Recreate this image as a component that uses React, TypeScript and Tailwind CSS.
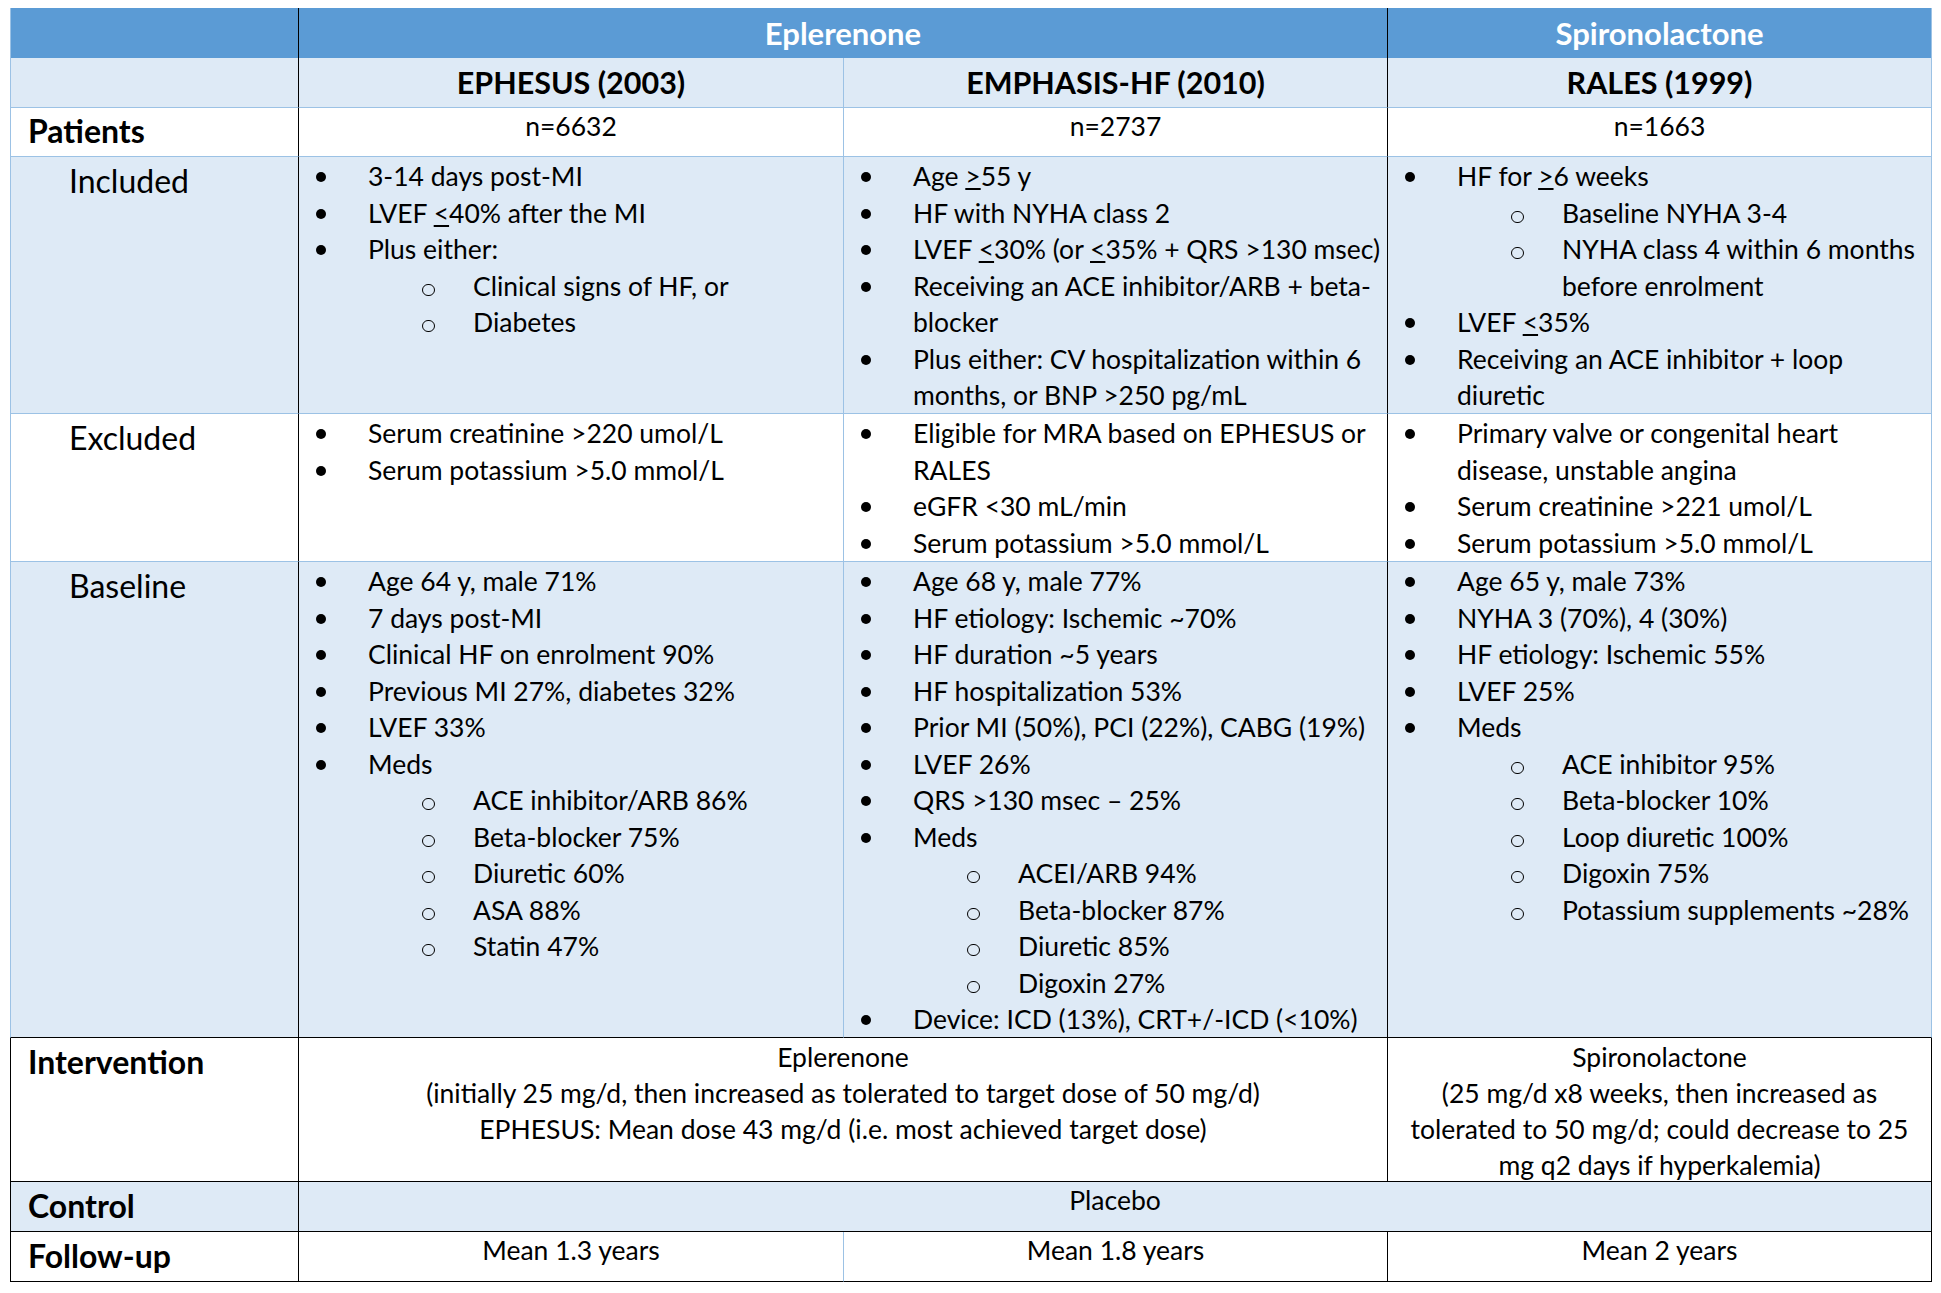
import React from "react";

type Item = { lvl: 1 | 2; lines: React.ReactNode[] };

const le = <span className="underline">&lt;</span>;
const ge = <span className="underline">&gt;</span>;

function BList({ items }: { items: Item[] }) {
  return (
    <div className="flex flex-col pt-[1px]">
      {items.map((it, i) => (
        <div key={i} className="flex">
          {it.lvl === 1 ? (
            <div className="w-[69px] shrink-0 pl-[17px] pt-[14px]">
              <div className="w-[10px] h-[10px] rounded-full bg-black" />
            </div>
          ) : (
            <div className="w-[174px] shrink-0 pl-[123px] pt-[16px]">
              <div className="w-[13px] h-[12px] rounded-full border-[1.5px] border-black" />
            </div>
          )}
          <div className="flex flex-col">
            {it.lines.map((l, j) => (
              <div key={j} className="whitespace-nowrap h-[36.5px] leading-[36.5px]">
                {l}
              </div>
            ))}
          </div>
        </div>
      ))}
    </div>
  );
}

const b = (...lines: React.ReactNode[]): Item => ({ lvl: 1, lines });
const s = (...lines: React.ReactNode[]): Item => ({ lvl: 2, lines });

export default function App() {
  const L = "border-[#9CC2E5]";
  return (
    <div className="w-[1941px] h-[1293px] bg-white font-['Lato',sans-serif] text-[26.5px] text-black">
      <div className="ml-[10px] pt-[8px]">
        <div className="grid w-[1922px] grid-cols-[289px_545px_544px_544px] grid-rows-[50px_50px_49px_257px_148px_476px_144px_50px_50px]">
          {/* Header row 1 */}
          <div className="bg-[#5B9BD5] border-l border-l-[#9CC2E5] border-r border-r-black" />
          <div className="col-span-2 bg-[#5B9BD5] border-r border-r-black flex items-center justify-center text-white font-bold text-[31px]">
            Eplerenone
          </div>
          <div className="bg-[#5B9BD5] border-r border-r-[#9CC2E5] flex items-center justify-center text-white font-bold text-[31px]">
            Spironolactone
          </div>

          {/* Header row 2 */}
          <div className="bg-[#DEEAF6] border-l border-l-[#9CC2E5] border-r border-r-black border-b border-b-[#9CC2E5]" />
          <div className={`bg-[#DEEAF6] border-r border-b ${L} flex items-center justify-center font-bold text-[30.5px]`}>
            EPHESUS (2003)
          </div>
          <div className="bg-[#DEEAF6] border-r border-r-black border-b border-b-[#9CC2E5] flex items-center justify-center font-bold text-[30.5px]">
            EMPHASIS-HF (2010)
          </div>
          <div className={`bg-[#DEEAF6] border-r border-b ${L} flex items-center justify-center font-bold text-[30.5px]`}>
            RALES (1999)
          </div>

          {/* Patients */}
          <div className="bg-white border-l border-l-[#9CC2E5] border-r border-r-black border-b border-b-[#9CC2E5] pl-[17px] pt-[3px] font-bold text-[32px] leading-[40px]">
            Patients
          </div>
          <div className={`bg-white border-r border-b ${L} text-center leading-[36.5px]`}>n=6632</div>
          <div className="bg-white border-r border-r-black border-b border-b-[#9CC2E5] text-center leading-[36.5px]">n=2737</div>
          <div className={`bg-white border-r border-b ${L} text-center leading-[36.5px]`}>n=1663</div>

          {/* Included */}
          <div className="bg-[#DEEAF6] border-l border-l-[#9CC2E5] border-r border-r-black border-b border-b-[#9CC2E5] pl-[58px] pt-[4px] text-[32px] leading-[40px]">
            Included
          </div>
          <div className={`bg-[#DEEAF6] border-r border-b ${L}`}>
            <BList
              items={[
                b("3-14 days post-MI"),
                b(<>LVEF {le}40% after the MI</>),
                b("Plus either:"),
                s("Clinical signs of HF, or"),
                s("Diabetes"),
              ]}
            />
          </div>
          <div className="bg-[#DEEAF6] border-r border-r-black border-b border-b-[#9CC2E5]">
            <BList
              items={[
                b(<>Age {ge}55 y</>),
                b("HF with NYHA class 2"),
                b(<>LVEF {le}30% (or {le}35% + QRS &gt;130 msec)</>),
                b("Receiving an ACE inhibitor/ARB + beta-", "blocker"),
                b("Plus either: CV hospitalization within 6", "months, or BNP >250 pg/mL"),
              ]}
            />
          </div>
          <div className={`bg-[#DEEAF6] border-r border-b ${L}`}>
            <BList
              items={[
                b(<>HF for {ge}6 weeks</>),
                s("Baseline NYHA 3-4"),
                s("NYHA class 4 within 6 months", "before enrolment"),
                b(<>LVEF {le}35%</>),
                b("Receiving an ACE inhibitor + loop", "diuretic"),
              ]}
            />
          </div>

          {/* Excluded */}
          <div className="bg-white border-l border-l-[#9CC2E5] border-r border-r-black border-b border-b-[#9CC2E5] pl-[58px] pt-[4px] text-[32px] leading-[40px]">
            Excluded
          </div>
          <div className={`bg-white border-r border-b ${L}`}>
            <BList items={[b("Serum creatinine >220 umol/L"), b("Serum potassium >5.0 mmol/L")]} />
          </div>
          <div className="bg-white border-r border-r-black border-b border-b-[#9CC2E5]">
            <BList
              items={[
                b("Eligible for MRA based on EPHESUS or", "RALES"),
                b("eGFR <30 mL/min"),
                b("Serum potassium >5.0 mmol/L"),
              ]}
            />
          </div>
          <div className={`bg-white border-r border-b ${L}`}>
            <BList
              items={[
                b("Primary valve or congenital heart", "disease, unstable angina"),
                b("Serum creatinine >221 umol/L"),
                b("Serum potassium >5.0 mmol/L"),
              ]}
            />
          </div>

          {/* Baseline */}
          <div className="bg-[#DEEAF6] border-l border-l-[#9CC2E5] border-r border-r-black border-b border-b-black pl-[58px] pt-[4px] text-[32px] leading-[40px]">
            Baseline
          </div>
          <div className="bg-[#DEEAF6] border-r border-r-[#9CC2E5] border-b border-b-black">
            <BList
              items={[
                b("Age 64 y, male 71%"),
                b("7 days post-MI"),
                b("Clinical HF on enrolment 90%"),
                b("Previous MI 27%, diabetes 32%"),
                b("LVEF 33%"),
                b("Meds"),
                s("ACE inhibitor/ARB 86%"),
                s("Beta-blocker 75%"),
                s("Diuretic 60%"),
                s("ASA 88%"),
                s("Statin 47%"),
              ]}
            />
          </div>
          <div className="bg-[#DEEAF6] border-r border-r-black border-b border-b-black">
            <BList
              items={[
                b("Age 68 y, male 77%"),
                b("HF etiology: Ischemic ~70%"),
                b("HF duration ~5 years"),
                b("HF hospitalization 53%"),
                b("Prior MI (50%), PCI (22%), CABG (19%)"),
                b("LVEF 26%"),
                b("QRS >130 msec \u2013 25%"),
                b("Meds"),
                s("ACEI/ARB 94%"),
                s("Beta-blocker 87%"),
                s("Diuretic 85%"),
                s("Digoxin 27%"),
                b("Device: ICD (13%), CRT+/-ICD (<10%)"),
              ]}
            />
          </div>
          <div className="bg-[#DEEAF6] border-r border-r-[#9CC2E5] border-b border-b-black">
            <BList
              items={[
                b("Age 65 y, male 73%"),
                b("NYHA 3 (70%), 4 (30%)"),
                b("HF etiology: Ischemic 55%"),
                b("LVEF 25%"),
                b("Meds"),
                s("ACE inhibitor 95%"),
                s("Beta-blocker 10%"),
                s("Loop diuretic 100%"),
                s("Digoxin 75%"),
                s("Potassium supplements ~28%"),
              ]}
            />
          </div>

          {/* Intervention */}
          <div className="bg-white border-l border-r border-b border-black pl-[17px] pt-[4px] font-bold text-[32px] leading-[40px]">
            Intervention
          </div>
          <div className="col-span-2 bg-white border-r border-b border-black text-center leading-[36px] pt-[1px]">
            <div>Eplerenone</div>
            <div>(initially 25 mg/d, then increased as tolerated to target dose of 50 mg/d)</div>
            <div>EPHESUS: Mean dose 43 mg/d (i.e. most achieved target dose)</div>
          </div>
          <div className="bg-white border-r border-b border-black text-center leading-[36px] pt-[1px]">
            <div>Spironolactone</div>
            <div>(25 mg/d x8 weeks, then increased as</div>
            <div>tolerated to 50 mg/d; could decrease to 25</div>
            <div>mg q2 days if hyperkalemia)</div>
          </div>

          {/* Control */}
          <div className="bg-[#DEEAF6] border-l border-r border-b border-black pl-[17px] pt-[4px] font-bold text-[32px] leading-[40px]">
            Control
          </div>
          <div className="col-span-3 bg-[#DEEAF6] border-r border-b border-black text-center leading-[36px]">
            Placebo
          </div>

          {/* Follow-up */}
          <div className="bg-white border-l border-r border-b border-black pl-[17px] pt-[4px] font-bold text-[32px] leading-[40px]">
            Follow-up
          </div>
          <div className="bg-white border-r border-r-[#9CC2E5] border-b border-b-black text-center leading-[36px]">
            Mean 1.3 years
          </div>
          <div className="bg-white border-r border-b border-black text-center leading-[36px]">Mean 1.8 years</div>
          <div className="bg-white border-r border-b border-black text-center leading-[36px]">Mean 2 years</div>
        </div>
      </div>
    </div>
  );
}
